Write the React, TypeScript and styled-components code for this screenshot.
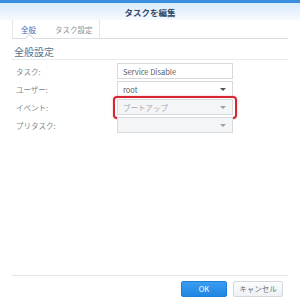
import * as React from 'react'
import styled, { createGlobalStyle } from 'styled-components'

const GlobalStyle = createGlobalStyle`
  html, body {
    margin: 0;
    padding: 0;
    background: #ffffff;
  }
  body {
    font-family: 'Noto Sans CJK JP', 'Noto Sans', sans-serif;
  }
`

const Window = styled.div`
  width: 300px;
  height: 301px;
  display: flex;
  flex-direction: column;
  background: #ffffff;
  overflow: hidden;
`

const TopBar = styled.div`
  height: 3px;
  background: #3b8fe0;
`

const Header = styled.div`
  height: 17px;
  display: flex;
  align-items: center;
  justify-content: center;
  background: linear-gradient(#d9ebfb, #f6fafe);
  color: #2e4a6b;
  font-size: 8.5px;
  font-weight: 700;
`

const TabBar = styled.div`
  display: flex;
  margin: 0 12px;
  height: 18px;
  border-bottom: 1px solid #d9dde2;
`

const Tab = styled.div<{ active?: boolean }>`
  display: flex;
  align-items: center;
  padding: ${(p) => (p.active ? '0 8px' : '0 6px 0 9px')};
  font-size: 7.5px;
  color: ${(p) => (p.active ? '#2f6fb8' : '#8a9096')};
  border-left: 1px solid ${(p) => (p.active ? '#e4e7ea' : 'transparent')};
  border-right: 1px solid ${(p) => (p.active ? 'transparent' : '#e4e7ea')};
  position: relative;
`

const Notch = styled.span`
  position: absolute;
  left: 50%;
  bottom: -4px;
  width: 6px;
  height: 6px;
  margin-left: -3px;
  background: #fff;
  border-left: 1px solid #d9dde2;
  border-top: 1px solid #d9dde2;
  transform: rotate(45deg);
`

const Content = styled.div`
  flex: 1;
  padding: 7px 12px 0;
  display: flex;
  flex-direction: column;
`

const SectionTitle = styled.div`
  font-size: 10px;
  line-height: 11px;
  color: #56728f;
  padding: 0 2px 2px;
  border-bottom: 1px solid #e8ebee;
`

const Form = styled.div`
  display: grid;
  grid-template-columns: 101px 116px;
  row-gap: 2px;
  margin-top: 3px;
  padding-left: 4px;
`

const Label = styled.div`
  display: flex;
  align-items: center;
  font-size: 7.5px;
  color: #80878e;
  height: 16px;
`

const Field = styled.div<{ disabled?: boolean }>`
  position: relative;
  height: 16px;
  box-sizing: border-box;
  border: 1px solid #d6dade;
  background: ${(p) => (p.disabled ? '#f3f5f7' : '#ffffff')};
  display: flex;
  align-items: center;
  justify-content: space-between;
  padding: 0 6px 0 5px;
  font-size: 7.5px;
  color: ${(p) => (p.disabled ? '#a4aab0' : '#555c63')};
`

const Highlight = styled.span`
  position: absolute;
  left: -5px;
  right: -5px;
  top: -4px;
  bottom: -5px;
  border: 2px solid #d6262f;
  border-radius: 4px;
  box-shadow: 0 0 2px rgba(214, 38, 47, 0.4);
  pointer-events: none;
`

const Caret = styled.span<{ disabled?: boolean }>`
  width: 0;
  height: 0;
  border-left: 3px solid transparent;
  border-right: 3px solid transparent;
  border-top: 3px solid ${(p) => (p.disabled ? '#9aa1a8' : '#4b5259')};
`

const Footer = styled.div`
  margin: 0 12px;
  border-top: 1px solid #e3e6e9;
  height: 25px;
  display: flex;
  justify-content: flex-end;
  align-items: center;
  gap: 6px;
  padding-right: 5px;
`

const Button = styled.div<{ primary?: boolean }>`
  box-sizing: border-box;
  height: 16px;
  width: ${(p) => (p.primary ? 46 : 50)}px;
  display: flex;
  align-items: center;
  justify-content: center;
  font-size: 7.5px;
  border-radius: 2px;
  color: ${(p) => (p.primary ? '#ffffff' : '#6b737b')};
  background: ${(p) => (p.primary ? 'linear-gradient(#3a9cf0, #1f86e3)' : 'linear-gradient(#fbfcfd, #eef1f4)')};
  border: 1px solid ${(p) => (p.primary ? '#1c7fd8' : '#d3d8dd')};
`

export default function App() {
  return (
    <Window>
      <GlobalStyle />
      <TopBar />
      <Header>タスクを編集</Header>
      <TabBar>
        <Tab active>
          全般
          <Notch />
        </Tab>
        <Tab>タスク設定</Tab>
      </TabBar>
      <Content>
        <SectionTitle>全般設定</SectionTitle>
        <Form>
          <Label>タスク:</Label>
          <Field>Service Disable</Field>
          <Label>ユーザー:</Label>
          <Field>
            root
            <Caret />
          </Field>
          <Label>イベント:</Label>
          <Field disabled>
            ブートアップ
            <Caret disabled />
            <Highlight />
          </Field>
          <Label>プリタスク:</Label>
          <Field disabled>
            <span />
            <Caret disabled />
          </Field>
        </Form>
      </Content>
      <Footer>
        <Button primary>OK</Button>
        <Button>キャンセル</Button>
      </Footer>
    </Window>
  )
}
